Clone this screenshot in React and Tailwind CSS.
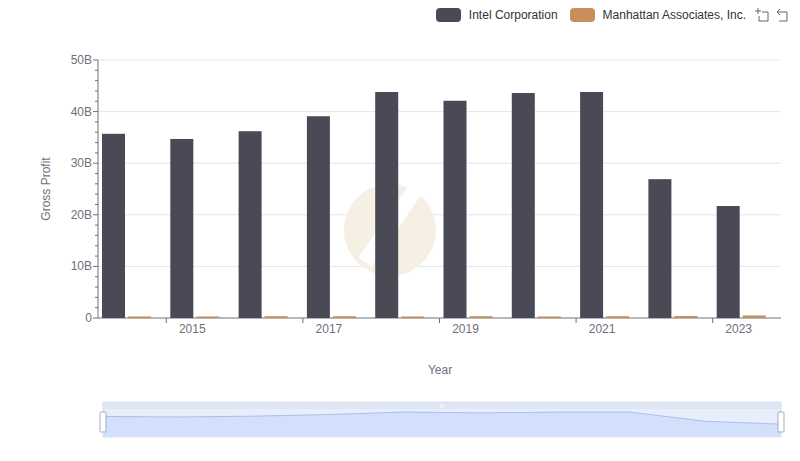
import React from 'react';

const intel = [35.7, 34.7, 36.2, 39.1, 43.8, 42.1, 43.6, 43.8, 26.9, 21.7];
const manh = [0.3, 0.3, 0.35, 0.35, 0.3, 0.35, 0.3, 0.35, 0.4, 0.5];
const x0 = 98, x1 = 781, y0 = 318, top = 60;
const cw = (x1 - x0) / 10;
const yv = (v) => y0 - (v / 50) * (y0 - top);

const App = () => {
  const sx = (i) => 104 + (i * 676) / 9;
  const sy = (v) => 436 - (v / 43.8) * 24;
  const line = intel.map((v, i) => `${sx(i)},${sy(v)}`).join(' L');
  return (
    <div className="w-[800px] h-[461px] bg-white flex flex-col" style={{ fontFamily: '"Liberation Sans", Arial, sans-serif' }}>
      <div className="flex items-center justify-end gap-2 pt-[4px] pr-[10px] h-[26px] text-[12px] text-[#333]">
        <span className="w-[25px] h-[14px] rounded-[4px] bg-[#4a4a56]" />
        <span className="mr-[4px]">Intel Corporation</span>
        <span className="w-[25px] h-[14px] rounded-[4px] bg-[#c98f5a]" />
        <span>Manhattan Associates, Inc.</span>
        <svg width="36" height="16" viewBox="0 0 36 16" fill="none" stroke="#666" strokeWidth="1">
          <path d="M1 4h6M4 1v6M8 5h6v9H5V9" />
          <path d="M26 2l-3 3 3 3M23 5h10v9h-8" />
        </svg>
      </div>
      <svg width="800" height="435" className="block">
        <g stroke="#e0e6f1">
          {[0, 10, 20, 30, 40, 50].map((v) => v > 0 && <line key={v} x1={x0} x2={x1} y1={yv(v) - 26} y2={yv(v) - 26} />)}
        </g>
        <g transform="translate(0,-26)">
          <circle cx="390" cy="230" r="46" fill="#f6efe4" />
          <path d="M365 262 L415 190" stroke="#fff" strokeWidth="16" />
          <line x1={x0} x2={x0} y1={top} y2={y0} stroke="#6e7079" />
          {Array.from({ length: 26 }, (_, i) => (
            <line key={i} x1={x0 - (i % 5 === 0 ? 5 : 3)} x2={x0} y1={yv(i * 2)} y2={yv(i * 2)} stroke="#6e7079" />
          ))}
          <line x1={x0} x2={x1} y1={y0} y2={y0} stroke="#6e7079" />
          {[0, 10, 20, 30, 40, 50].map((v) => (
            <text key={v} x={x0 - 6} y={yv(v) + 4} textAnchor="end" fontSize="12" fill="#6e7079">{v ? `${v}B` : '0'}</text>
          ))}
          {intel.map((v, i) => (
            <g key={i}>
              <rect x={x0 + 4 + i * cw} y={yv(v)} width="23" height={y0 - yv(v)} fill="#4a4a56" />
              <rect x={x0 + 30 + i * cw} y={yv(manh[i])} width="23" height={y0 - yv(manh[i])} fill="#c98f5a" />
            </g>
          ))}
          {[2015, 2017, 2019, 2021, 2023].map((y, k) => {
            const cx = x0 + (1 + k * 2) * cw + 30;
            return (
              <g key={y}>
                <line x1={cx - 30} x2={cx - 30} y1={y0} y2={y0 + 5} stroke="#6e7079" />
                <text x={cx - 4} y={y0 + 15} textAnchor="middle" fontSize="12" fill="#6e7079">{y}</text>
              </g>
            );
          })}
          <text x="440" y="374" textAnchor="middle" fontSize="12" fill="#6e7079">Year</text>
          <text transform="translate(50,189) rotate(-90)" textAnchor="middle" fontSize="12" fill="#6e7079">Gross Profit</text>
          <rect x="103" y="402" width="678" height="35" fill="#e8eefb" stroke="#d2dbee" />
          <rect x="103" y="402" width="678" height="7" fill="#dfe5f3" />
          <text x="442" y="408" textAnchor="middle" fontSize="6" fill="#fff">III</text>
          <path d={`M${sx(0)},436 L${line} L${sx(9)},436 Z`} fill="#d3e0fb" />
          <path d={`M${line}`} fill="none" stroke="#a9bff0" />
          <rect x="100" y="412" width="6" height="20" rx="1" fill="#fff" stroke="#a0aec8" />
          <rect x="778" y="412" width="6" height="20" rx="1" fill="#fff" stroke="#a0aec8" />
        </g>
      </svg>
    </div>
  );
};

export default App;
